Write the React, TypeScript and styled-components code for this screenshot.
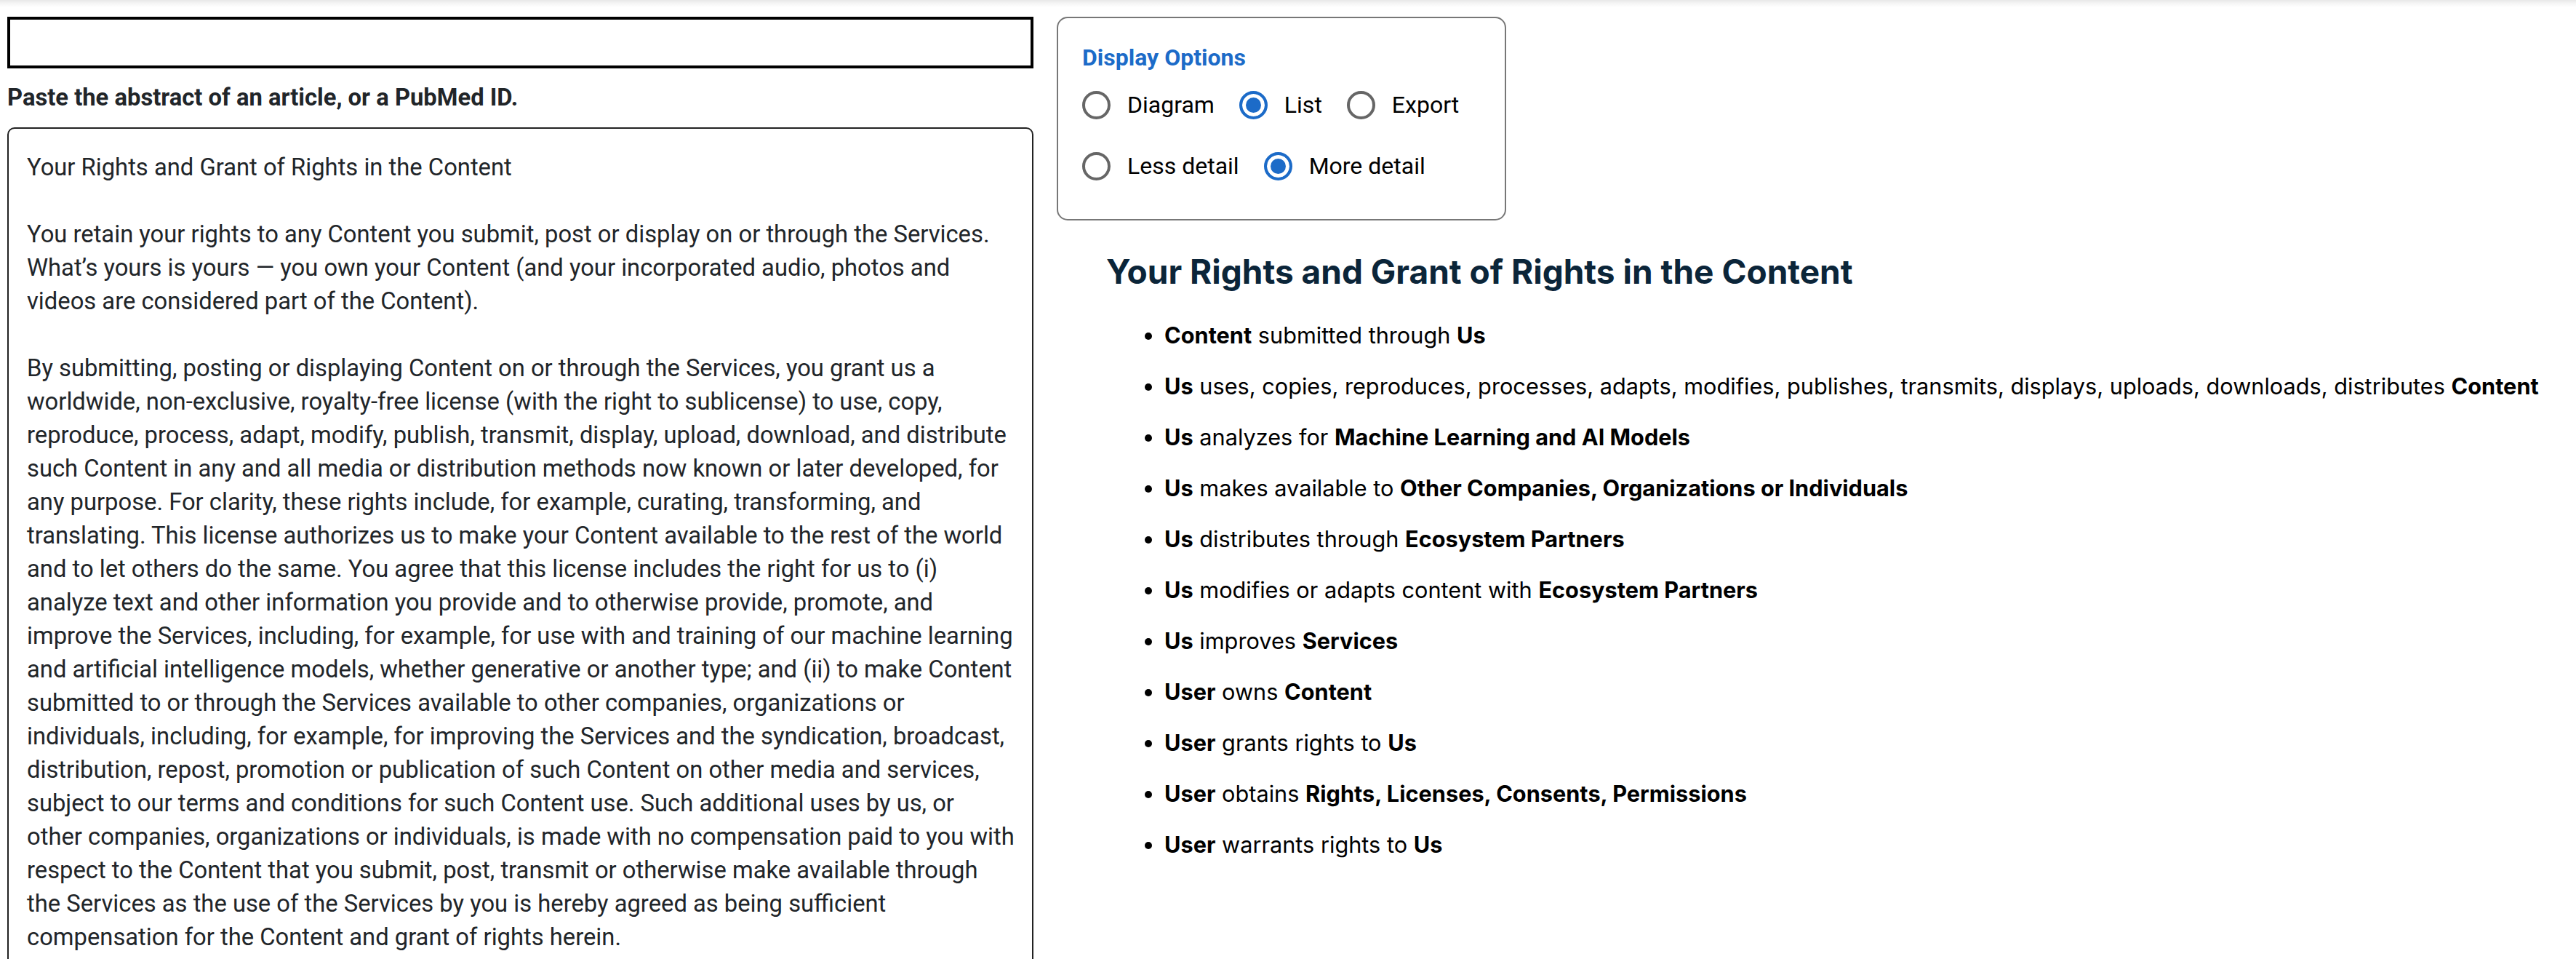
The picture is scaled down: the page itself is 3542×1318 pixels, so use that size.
import React from "react";
import styled, { createGlobalStyle } from "styled-components";

const GlobalStyle = createGlobalStyle`
  html, body {
    margin: 0;
    padding: 0;
    background: #ffffff;
  }
  body {
    background: linear-gradient(#e8e8e8 0px, #f6f6f6 5px, #ffffff 10px) no-repeat;
    font-family: Roboto, "Liberation Sans", Arial, sans-serif;
    color: #212529;
  }
  * { box-sizing: border-box; }
`;

const Page = styled.div`
  display: flex;
  align-items: flex-start;
  gap: 32px;
  padding: 23px 10px 0 10px;
  min-height: 1318px;
  overflow: hidden;
`;

const LeftColumn = styled.div`
  width: 1411px;
  flex: none;
  display: flex;
  flex-direction: column;
`;

const IdInput = styled.input`
  display: block;
  width: 100%;
  height: 71px;
  border: 4px solid #000;
  border-radius: 0;
  background: #fff;
  font: 32px Roboto, sans-serif;
  padding: 0 12px;
  outline: none;
`;

const FieldLabel = styled.label`
  display: block;
  margin-top: 20px;
  font-family: Roboto, "Liberation Sans", sans-serif;
  font-weight: 700;
  font-size: 32.75px;
  line-height: 40px;
  color: #212529;
`;

const AbstractArea = styled.textarea`
  display: block;
  margin-top: 21px;
  width: 100%;
  height: 1200px;
  border: 2px solid #222;
  border-radius: 10px;
  padding: 30px 23.5px 30px 25px;
  font-family: Roboto, "Liberation Sans", sans-serif;
  font-size: 32.75px;
  line-height: 46px;
  color: #212529;
  background: #fff;
  resize: none;
  overflow: hidden;
  outline: none;
`;

const RightColumn = styled.div`
  flex: 1;
  display: flex;
  flex-direction: column;
`;

const OptionsBox = styled.fieldset`
  width: 618px;
  margin: 0;
  border: 2px solid #777;
  border-radius: 15px;
  padding: 34px 0 45px 33px;
  display: flex;
  flex-direction: column;
`;

const OptionsTitle = styled.div`
  font-family: Roboto, "Liberation Sans", sans-serif;
  font-weight: 700;
  font-size: 32px;
  line-height: 40px;
  color: #1c6bc8;
`;

const OptionRow = styled.div<{ $first?: boolean }>`
  display: flex;
  align-items: center;
  gap: 34px;
  height: 56px;
  margin-top: ${(p) => (p.$first ? "17px" : "28px")};
`;

const OptionLabel = styled.label`
  display: flex;
  align-items: center;
  gap: 23px;
  font-family: Roboto, "Liberation Sans", sans-serif;
  font-size: 32px;
  line-height: 40px;
  color: #000;
  cursor: pointer;
`;

const Radio = styled.input.attrs({ type: "radio" })`
  appearance: none;
  -webkit-appearance: none;
  margin: 0;
  width: 39px;
  height: 39px;
  flex: none;
  border: 4px solid #666;
  border-radius: 50%;
  background: #fff;
  &:checked {
    border-color: #1c6bc8;
    background: #1c6bc8;
    box-shadow: inset 0 0 0 5px #fff;
  }
`;

const ResultHeading = styled.h2`
  margin: 43px 0 0 68px;
  font-family: Inter, "Noto Sans", sans-serif;
  font-weight: 700;
  font-size: 46px;
  line-height: 55px;
  color: #0b2539;
`;

const RelationList = styled.ul`
  margin: 40px 0 0 70px;
  padding: 0 0 0 78px;
  list-style: disc;
  font-family: Inter, "Noto Sans", sans-serif;
  font-size: 30.7px;
  line-height: 40px;
  color: #000;
`;

const RelationItem = styled.li`
  margin-bottom: 30px;
  white-space: nowrap;
`;

const Entity = styled.strong`
  font-weight: 700;
`;

const abstractText = `Your Rights and Grant of Rights in the Content

You retain your rights to any Content you submit, post or display on or through the Services. What\u2019s yours is yours \u2014 you own your Content (and your incorporated audio, photos and videos are considered part of the Content).

By submitting, posting or displaying Content on or through the Services, you grant us a worldwide, non-exclusive, royalty-free license (with the right to sublicense) to use, copy, reproduce, process, adapt, modify, publish, transmit, display, upload, download, and distribute such Content in any and all media or distribution methods now known or later developed, for any purpose. For clarity, these rights include, for example, curating, transforming, and translating. This license authorizes us to make your Content available to the rest of the world and to let others do the same. You agree that this license includes the right for us to (i) analyze text and other information you provide and to otherwise provide, promote, and improve the Services, including, for example, for use with and training of our machine learning and artificial intelligence models, whether generative or another type; and (ii) to make Content submitted to or through the Services available to other companies, organizations or individuals, including, for example, for improving the Services and the syndication, broadcast, distribution, repost, promotion or publication of such Content on other media and services, subject to our terms and conditions for such Content use. Such additional uses by us, or other companies, organizations or individuals, is made with no compensation paid to you with respect to the Content that you submit, post, transmit or otherwise make available through the Services as the use of the Services by you is hereby agreed as being sufficient compensation for the Content and grant of rights herein.`;

type Relation = { subject: string; verb: string; object: string };

const relations: Relation[] = [
  { subject: "Content", verb: "submitted through", object: "Us" },
  {
    subject: "Us",
    verb: "uses, copies, reproduces, processes, adapts, modifies, publishes, transmits, displays, uploads, downloads, distributes",
    object: "Content",
  },
  { subject: "Us", verb: "analyzes for", object: "Machine Learning and AI Models" },
  { subject: "Us", verb: "makes available to", object: "Other Companies, Organizations or Individuals" },
  { subject: "Us", verb: "distributes through", object: "Ecosystem Partners" },
  { subject: "Us", verb: "modifies or adapts content with", object: "Ecosystem Partners" },
  { subject: "Us", verb: "improves", object: "Services" },
  { subject: "User", verb: "owns", object: "Content" },
  { subject: "User", verb: "grants rights to", object: "Us" },
  { subject: "User", verb: "obtains", object: "Rights, Licenses, Consents, Permissions" },
  { subject: "User", verb: "warrants rights to", object: "Us" },
];

export default function App() {
  const [view, setView] = React.useState("list");
  const [detail, setDetail] = React.useState("more");

  return (
    <>
      <GlobalStyle />
      <Page>
        <LeftColumn>
          <IdInput type="text" aria-label="PubMed ID" />
          <FieldLabel htmlFor="abstract">Paste the abstract of an article, or a PubMed ID.</FieldLabel>
          <AbstractArea id="abstract" defaultValue={abstractText} spellCheck={false} />
        </LeftColumn>
        <RightColumn>
          <OptionsBox>
            <OptionsTitle>Display Options</OptionsTitle>
            <OptionRow $first>
              {[
                ["diagram", "Diagram"],
                ["list", "List"],
                ["export", "Export"],
              ].map(([v, l]) => (
                <OptionLabel key={v}>
                  <Radio name="view" checked={view === v} onChange={() => setView(v)} />
                  {l}
                </OptionLabel>
              ))}
            </OptionRow>
            <OptionRow>
              {[
                ["less", "Less detail"],
                ["more", "More detail"],
              ].map(([v, l]) => (
                <OptionLabel key={v}>
                  <Radio name="detail" checked={detail === v} onChange={() => setDetail(v)} />
                  {l}
                </OptionLabel>
              ))}
            </OptionRow>
          </OptionsBox>
          <ResultHeading>Your Rights and Grant of Rights in the Content</ResultHeading>
          <RelationList>
            {relations.map((r, i) => (
              <RelationItem key={i}>
                <Entity>{r.subject}</Entity> {r.verb} <Entity>{r.object}</Entity>
              </RelationItem>
            ))}
          </RelationList>
        </RightColumn>
      </Page>
    </>
  );
}
